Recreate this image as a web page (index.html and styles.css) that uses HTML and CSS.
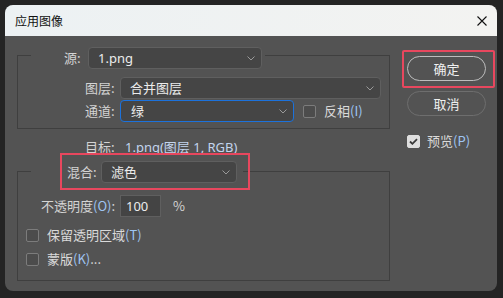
FILE: index.html
```html
<!DOCTYPE html>
<html lang="zh-CN">
<head>
<meta charset="utf-8">
<title>应用图像</title>
<link rel="stylesheet" href="styles.css">
</head>
<body>
<div class="window">
  <div class="titlebar">
    <span class="title">应用图像</span>
    <svg class="close" width="10" height="10" viewBox="0 0 10 10"><path d="M0.5 0.5L9.5 9.5M9.5 0.5L0.5 9.5" stroke="#111" stroke-width="1.1" fill="none"/></svg>
  </div>
  <div class="content">
    <div class="main">
      <div class="group g1">
        <div class="legend l1">
          <span class="label w-src">源:</span>
          <div class="select s-src"><span class="val">1.png</span><svg class="chev" width="8" height="5" viewBox="0 0 8 5"><path d="M0.5 0.5L4 4L7.5 0.5" stroke="#9a9a9a" fill="none"/></svg></div>
        </div>
        <div class="row r-layer">
          <span class="label w-lbl">图层:</span>
          <div class="select s-layer"><span class="val">合并图层</span><svg class="chev" width="8" height="5" viewBox="0 0 8 5"><path d="M0.5 0.5L4 4L7.5 0.5" stroke="#9a9a9a" fill="none"/></svg></div>
        </div>
        <div class="row r-chan">
          <span class="label w-lbl">通道:</span>
          <div class="select s-chan focus"><span class="val">绿</span><svg class="chev" width="8" height="5" viewBox="0 0 8 5"><path d="M0.5 0.5L4 4L7.5 0.5" stroke="#9a9a9a" fill="none"/></svg></div>
          <div class="check c-invert"><span class="box"></span><span class="ctext">反相<span class="mn">(I)</span></span></div>
        </div>
      </div>
      <div class="target"><span class="label w-lbl">目标:</span><span class="tval">1.png(图层 1, RGB)</span></div>
      <div class="group g2">
        <div class="legend l2">
          <span class="label w-blend">混合:</span>
          <div class="select s-blend"><span class="val">滤色</span><svg class="chev" width="8" height="5" viewBox="0 0 8 5"><path d="M0.5 0.5L4 4L7.5 0.5" stroke="#9a9a9a" fill="none"/></svg></div>
        </div>
        <div class="row r-opacity">
          <span class="label w-op">不透明度<span class="mn">(O)</span>:</span>
          <div class="input"><span class="val">100</span></div>
          <span class="label pct">%</span>
        </div>
        <div class="check c-row c-first"><span class="box"></span><span class="ctext">保留透明区域<span class="mn">(T)</span></span></div>
        <div class="check c-row c-second"><span class="box"></span><span class="ctext">蒙版<span class="mn">(K)</span>...</span></div>
      </div>
    </div>
    <div class="side">
      <button class="btn btn-ok">确定</button>
      <button class="btn btn-cancel">取消</button>
      <div class="check c-preview"><span class="box checked"><svg width="9" height="7" viewBox="0 0 9 7"><path d="M1 3.5L3.4 5.8L8 1.2" stroke="#3a3a3a" stroke-width="1.8" fill="none"/></svg></span><span class="ctext">预览<span class="mn">(P)</span></span></div>
    </div>
  </div>
  <div class="hl hl-blend"></div>
  <div class="hl hl-ok"></div>
</div>
</body>
</html>
```

FILE: styles.css
```css
* { box-sizing: border-box; }
html, body { margin: 0; padding: 0; }
body {
  background: #242424;
  width: 503px;
  height: 298px;
  overflow: hidden;
  padding: 5px 0 0 5px;
  font-family: "Noto Sans", "Noto Sans CJK SC", sans-serif;
  font-size: 13px;
  color: #d6d6d6;
}
.window {
  width: 492px;
  height: 286px;
  border-radius: 8px;
  background: #535353;
  overflow: hidden;
  position: relative;
  display: flex;
  flex-direction: column;
}
.titlebar {
  height: 31px;
  flex: none;
  display: flex;
  align-items: center;
  justify-content: space-between;
  padding: 0 10px;
  background: linear-gradient(90deg, #ecf1f3, #f3f3f1);
}
.title {
  font-family: "Noto Sans CJK SC", sans-serif;
  font-size: 12px;
  color: #111;
  line-height: 16px;
}
.close { display: block; }
.content {
  flex: 1;
  display: flex;
  padding-left: 12px;
}
.main {
  width: 373px;
  margin-top: 19px;
}
.group {
  border: 1px solid #3f3f3f;
  width: 373px;
}
.legend {
  display: flex;
  align-items: center;
  height: 22px;
  width: max-content;
  background: #535353;
  margin-left: 13px;
}
.l1 { margin-top: -9px; padding-left: 33px; padding-right: 3px; }
.l2 { margin-top: -11px; padding-left: 36px; padding-right: 6px; }
.label {
  font-family: "Noto Sans CJK SC", sans-serif;
  line-height: 18px;
  color: #d4d4d4;
  white-space: nowrap;
}
.w-src { width: 24px; }
.w-lbl { width: 35px; }
.w-blend { width: 34px; }
.w-op { width: 79px; }
.mn { color: #9ec4f2; }
.select {
  height: 22px;
  background: #454545;
  border: 1px solid #5f5f5f;
  border-radius: 4px;
  display: flex;
  align-items: center;
  justify-content: space-between;
  padding: 0 6px 0 9px;
}
.select.focus { border: 1.5px solid #1c72dc; padding-left: 10px; }
.val {
  font-family: "Noto Sans", "Noto Sans CJK SC", sans-serif;
  color: #ececec;
  line-height: 18px;
}
.chev { display: block; }
.s-src { width: 174px; }
.s-layer { width: 261px; }
.s-chan { width: 174px; }
.s-blend { width: 136px; }
.row {
  display: flex;
  align-items: center;
  height: 22px;
}
.g1 .row { margin-left: 67px; }
.r-layer { margin-top: 8px; }
.r-chan { margin-top: 1px; }
.g1 { padding-bottom: 6px; }
.check {
  display: flex;
  align-items: center;
  height: 20px;
}
.box {
  width: 13px;
  height: 13px;
  border: 1px solid #7c7c7c;
  border-radius: 2px;
  background: #4c4c4c;
  flex: none;
  display: flex;
  align-items: center;
  justify-content: center;
}
.box.checked { background: #dedede; border-color: #dedede; }
.ctext {
  font-family: "Noto Sans CJK SC", sans-serif;
  line-height: 18px;
  color: #dadada;
  margin-left: 8px;
  white-space: nowrap;
}
.c-invert { margin-left: 9px; }
.target {
  display: flex;
  align-items: center;
  height: 20px;
  margin-top: 8px;
  padding-left: 68px;
}
.tval {
  color: #c3d5ee;
  line-height: 18px;
  margin-left: 5px;
  font-family: "Noto Sans", "Noto Sans CJK SC", sans-serif;
}
.g2 { margin-top: 14px; padding-bottom: 11px; }
.r-opacity { margin-left: 23px; margin-top: 12px; }
.input {
  width: 41px;
  height: 22px;
  background: #444444;
  border: 1px solid #5f5f5f;
  display: flex;
  align-items: center;
  padding-left: 5px;
}
.pct { margin-left: 12px; }
.c-row { margin-left: 8px; }
.c-first { margin-top: 8px; }
.c-second { margin-top: 4px; }
.side {
  margin-left: 17px;
  width: 79px;
  padding-top: 20px;
  display: flex;
  flex-direction: column;
}
.btn {
  width: 79px;
  height: 25px;
  border-radius: 13px;
  background: transparent;
  font-family: "Noto Sans CJK SC", sans-serif;
  font-size: 13px;
  line-height: 18px;
  color: #f0f0f0;
  padding: 0;
}
.btn-ok { border: 1.5px solid #bdbdbd; }
.btn-cancel { border: 1.5px solid #6e6e6e; margin-top: 10px; }
.c-preview { margin-top: 15px; }
.c-preview .ctext { margin-left: 7px; }
.hl {
  position: absolute;
  border: 2px solid #e8475e;
  pointer-events: none;
}
.hl-blend { left: 55px; top: 148px; width: 190px; height: 37px; }
.hl-ok { left: 397px; top: 45px; width: 93px; height: 38px; border-radius: 2px; }
```
